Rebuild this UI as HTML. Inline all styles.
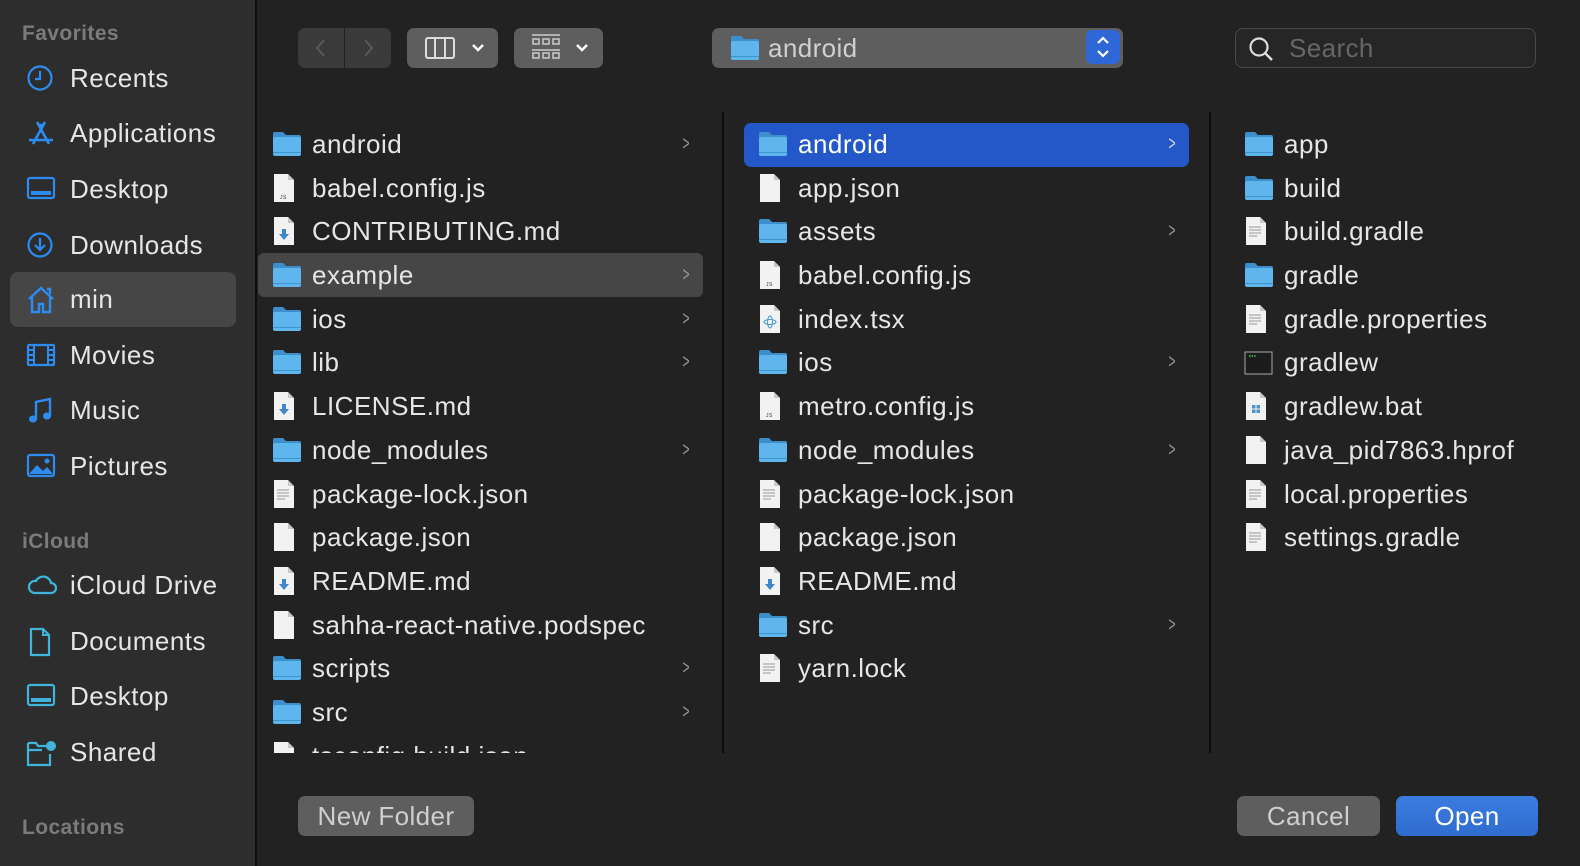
<!DOCTYPE html>
<html><head><meta charset="utf-8"><style>
*{margin:0;padding:0;box-sizing:border-box}
body{width:1580px;height:866px;overflow:hidden;background:#222;font-family:"Liberation Sans",sans-serif;color:#e6e6e6;position:relative}
.side{position:absolute;left:0;top:0;width:257px;height:866px;background:#2c2d2c;border-right:2px solid #0e0e0e}
.hdr{position:absolute;left:22px;font-size:21px;letter-spacing:.4px;color:#7b7b7b;font-weight:bold}
.si{position:absolute;left:10px;width:226px;height:55px;border-radius:8px;font-size:26px;letter-spacing:.5px;line-height:55px;padding-left:60px}
.si svg{position:absolute;left:16px;top:13px}
.sel{background:#464646}
.btn{position:absolute;background:#5e5e5e;border-radius:7px}
.col{position:absolute;top:123px}
.r{position:relative;height:43.7px;line-height:43.7px;font-size:26px;letter-spacing:.5px;white-space:nowrap}
.r svg{position:absolute;top:8px}
.ch{position:absolute;font-size:20px;color:#9a9a9a;transform:scaleX(.6)}
.vl{position:absolute;top:112px;width:2px;height:641px;background:#0c0c0c}
.bt{font-size:26px;letter-spacing:.4px}
</style></head><body>
<svg width="0" height="0" style="position:absolute">
<defs>
<symbol id="fo" viewBox="0 0 30 26"><path d="M1 3a2 2 0 0 1 2-2h8l3 3h13a2 2 0 0 1 2 2v2H1z" fill="#3d8fcc"/><rect x="1" y="6" width="28" height="19" rx="2" fill="#5fb6ec"/><rect x="1" y="21" width="28" height="1" fill="#3f93cf"/></symbol>
<symbol id="fi" viewBox="0 0 24 30"><path d="M2 1h14l6 6v22H2z" fill="#f2f2f2"/><path d="M16 1v6h6" fill="#c8c8c8"/></symbol>
<symbol id="ln" viewBox="0 0 24 30"><path d="M2 1h14l6 6v22H2z" fill="#f2f2f2"/><path d="M16 1v6h6" fill="#c8c8c8"/><path d="M5 11h12M5 14h12M5 17h12M5 20h8" stroke="#aaa" stroke-width="1.2"/></symbol>
<symbol id="js" viewBox="0 0 24 30"><path d="M2 1h14l6 6v22H2z" fill="#f2f2f2"/><path d="M16 1v6h6" fill="#c8c8c8"/><text x="8" y="26" font-size="5" fill="#333" font-family="Liberation Sans">JS</text></symbol>
<symbol id="md" viewBox="0 0 24 30"><path d="M2 1h14l6 6v22H2z" fill="#f2f2f2"/><path d="M16 1v6h6" fill="#c8c8c8"/><path d="M10 13h4v5h3l-5 6-5-6h3z" fill="#3f87c8"/></symbol>
<symbol id="tx" viewBox="0 0 24 30"><path d="M2 1h14l6 6v22H2z" fill="#f2f2f2"/><path d="M16 1v6h6" fill="#c8c8c8"/><ellipse cx="12" cy="18" rx="6" ry="2.5" fill="none" stroke="#4a9ad0"/><ellipse cx="12" cy="18" rx="2.5" ry="6" fill="none" stroke="#4a9ad0"/></symbol>
</defs></svg>

<div class="side">
<div class="hdr" style="top:22px">Favorites</div>
<div class="si" style="top:51px"><svg width="28" height="28" viewBox="0 0 28 28"><circle cx="14" cy="14" r="11.5" fill="none" stroke="#2e8cf0" stroke-width="2.2"/><path d="M14 7v8h-5" fill="none" stroke="#2e8cf0" stroke-width="2.2"/></svg>Recents</div>
<div class="si" style="top:106px"><svg width="30" height="30" viewBox="0 0 30 30"><path d="M11 3l12 22M19 3L7 25M3 21h24M12 6h6" fill="none" stroke="#2e8cf0" stroke-width="2.6"/></svg>Applications</div>
<div class="si" style="top:162px"><svg width="30" height="28" viewBox="0 0 30 28"><rect x="2" y="3" width="26" height="20" rx="2" fill="none" stroke="#2e8cf0" stroke-width="2.2"/><rect x="5" y="16" width="20" height="4" fill="#2e8cf0"/></svg>Desktop</div>
<div class="si" style="top:218px"><svg width="28" height="28" viewBox="0 0 28 28"><circle cx="14" cy="14" r="11.5" fill="none" stroke="#2e8cf0" stroke-width="2.2"/><path d="M14 7v12M9 14l5 5 5-5" fill="none" stroke="#2e8cf0" stroke-width="2.2"/></svg>Downloads</div>
<div class="si sel" style="top:272px"><svg width="30" height="30" viewBox="0 0 30 30"><path d="M3 14L15 3l12 11M6 12v15h7v-8h4v8h7V12M21 4h3v5" fill="none" stroke="#2e8cf0" stroke-width="2.4"/></svg>min</div>
<div class="si" style="top:328px"><svg width="30" height="28" viewBox="0 0 30 28"><rect x="2" y="4" width="26" height="20" rx="1" fill="none" stroke="#2e8cf0" stroke-width="2.2"/><path d="M8 4v20M22 4v20M2 9h6M2 14h6M2 19h6M22 9h6M22 14h6M22 19h6" stroke="#2e8cf0" stroke-width="2"/></svg>Movies</div>
<div class="si" style="top:383px"><svg width="28" height="30" viewBox="0 0 28 30"><path d="M10 23V6l14-3v17" fill="none" stroke="#2e8cf0" stroke-width="2.4"/><ellipse cx="7" cy="23" rx="4" ry="3.5" fill="#2e8cf0"/><ellipse cx="21" cy="20" rx="4" ry="3.5" fill="#2e8cf0"/></svg>Music</div>
<div class="si" style="top:439px"><svg width="30" height="28" viewBox="0 0 30 28"><rect x="2" y="3" width="26" height="21" rx="2" fill="none" stroke="#2e8cf0" stroke-width="2.2"/><path d="M3 22l8-9 6 6 4-4 6 7z" fill="#2e8cf0"/><circle cx="21" cy="9" r="2.5" fill="#2e8cf0"/></svg>Pictures</div>
<div class="hdr" style="top:530px">iCloud</div>
<div class="si" style="top:558px"><svg width="32" height="28" viewBox="0 0 32 28"><path d="M8 22h17a5 5 0 0 0 0-10 8 8 0 0 0-15-2 6 6 0 0 0-2 12z" fill="none" stroke="#3fb5dc" stroke-width="2.2"/></svg>iCloud Drive</div>
<div class="si" style="top:614px"><svg width="28" height="30" viewBox="0 0 28 30"><path d="M5 2h12l6 6v20H5z" fill="none" stroke="#3fb5dc" stroke-width="2.2"/><path d="M17 2v6h6" fill="none" stroke="#3fb5dc" stroke-width="2"/></svg>Documents</div>
<div class="si" style="top:669px"><svg width="30" height="28" viewBox="0 0 30 28"><rect x="2" y="3" width="26" height="20" rx="2" fill="none" stroke="#3fb5dc" stroke-width="2.2"/><rect x="5" y="16" width="20" height="4" fill="#3fb5dc"/></svg>Desktop</div>
<div class="si" style="top:725px"><svg width="32" height="30" viewBox="0 0 32 30"><path d="M2 5h8l2 3h10M2 5v22h22V16M2 12h14" fill="none" stroke="#3fb5dc" stroke-width="2.2"/><circle cx="25" cy="8" r="5" fill="#3fb5dc"/></svg>Shared</div>
<div class="hdr" style="top:816px">Locations</div>
</div>

<div class="btn" style="left:298px;top:28px;width:46px;height:40px;background:#3a3a3a;border-radius:7px 0 0 7px"><svg width="46" height="40"><path d="M26 12l-7 8 7 8" fill="none" stroke="#5a5a5a" stroke-width="2"/></svg></div>
<div class="btn" style="left:345px;top:28px;width:46px;height:40px;background:#3a3a3a;border-radius:0 7px 7px 0"><svg width="46" height="40"><path d="M20 12l7 8-7 8" fill="none" stroke="#5a5a5a" stroke-width="2"/></svg></div>
<div class="btn" style="left:407px;top:28px;width:91px;height:40px"><svg width="91" height="40"><rect x="19" y="10" width="28" height="20" rx="2" fill="none" stroke="#ddd" stroke-width="2"/><path d="M28 10v20M38 10v20" stroke="#ddd" stroke-width="2"/><path d="M66 17l5 5 5-5" fill="none" stroke="#fff" stroke-width="2.5"/></svg></div>
<div class="btn" style="left:514px;top:28px;width:89px;height:40px"><svg width="89" height="40"><path d="M18 7h28M18 22h28" stroke="#ccc" stroke-width="1.5"/><g fill="none" stroke="#ccc" stroke-width="1.5"><rect x="19" y="11" width="6" height="5"/><rect x="29" y="11" width="6" height="5"/><rect x="39" y="11" width="6" height="5"/><rect x="19" y="25" width="6" height="5"/><rect x="29" y="25" width="6" height="5"/><rect x="39" y="25" width="6" height="5"/></g><path d="M63 17l5 5 5-5" fill="none" stroke="#fff" stroke-width="2.5"/></svg></div>
<div class="btn bt" style="left:712px;top:28px;width:411px;height:40px;line-height:40px;color:#d0d0d0;padding-left:56px">android
<svg style="position:absolute;left:18px;top:7px" width="30" height="26"><use href="#fo"/></svg>
<div style="position:absolute;right:3px;top:2px;width:34px;height:34px;background:#2f67d6;border-radius:6px"><svg width="34" height="34"><path d="M12 13l5-5 5 5M12 21l5 5 5-5" fill="none" stroke="#fff" stroke-width="2.2"/></svg></div></div>
<div class="bt" style="position:absolute;left:1235px;top:28px;width:301px;height:40px;border:1px solid #4a4a4a;border-radius:8px;background:#262626;line-height:38px;color:#666;padding-left:53px">Search
<svg style="position:absolute;left:12px;top:7px" width="28" height="28"><circle cx="11" cy="11" r="8.5" fill="none" stroke="#ddd" stroke-width="2.2"/><path d="M17 17l7 7" stroke="#ddd" stroke-width="2.4"/></svg></div>

<div class="vl" style="left:722px"></div>
<div class="vl" style="left:1209px"></div>

<div style="position:absolute;left:258px;top:253px;width:445px;height:44px;background:#464646;border-radius:6px"></div>
<div class="col" style="left:272px;height:630px;overflow:hidden;width:440px">
<div class="r"><svg width="30" height="26"><use href="#fo"/></svg><span style="margin-left:40px">android</span><span class="ch" style="left:408px">&gt;</span></div>
<div class="r"><svg width="24" height="30" style="top:6px"><use href="#js"/></svg><span style="margin-left:40px">babel.config.js</span></div>
<div class="r"><svg width="24" height="30" style="top:6px"><use href="#md"/></svg><span style="margin-left:40px">CONTRIBUTING.md</span></div>
<div class="r"><svg width="30" height="26"><use href="#fo"/></svg><span style="margin-left:40px">example</span><span class="ch" style="left:408px">&gt;</span></div>
<div class="r"><svg width="30" height="26"><use href="#fo"/></svg><span style="margin-left:40px">ios</span><span class="ch" style="left:408px">&gt;</span></div>
<div class="r"><svg width="30" height="26"><use href="#fo"/></svg><span style="margin-left:40px">lib</span><span class="ch" style="left:408px">&gt;</span></div>
<div class="r"><svg width="24" height="30" style="top:6px"><use href="#md"/></svg><span style="margin-left:40px">LICENSE.md</span></div>
<div class="r"><svg width="30" height="26"><use href="#fo"/></svg><span style="margin-left:40px">node_modules</span><span class="ch" style="left:408px">&gt;</span></div>
<div class="r"><svg width="24" height="30" style="top:6px"><use href="#ln"/></svg><span style="margin-left:40px">package-lock.json</span></div>
<div class="r"><svg width="24" height="30" style="top:6px"><use href="#fi"/></svg><span style="margin-left:40px">package.json</span></div>
<div class="r"><svg width="24" height="30" style="top:6px"><use href="#md"/></svg><span style="margin-left:40px">README.md</span></div>
<div class="r"><svg width="24" height="30" style="top:6px"><use href="#fi"/></svg><span style="margin-left:40px">sahha-react-native.podspec</span></div>
<div class="r"><svg width="30" height="26"><use href="#fo"/></svg><span style="margin-left:40px">scripts</span><span class="ch" style="left:408px">&gt;</span></div>
<div class="r"><svg width="30" height="26"><use href="#fo"/></svg><span style="margin-left:40px">src</span><span class="ch" style="left:408px">&gt;</span></div>
<div class="r"><svg width="24" height="30" style="top:6px"><use href="#fi"/></svg><span style="margin-left:40px">tsconfig.build.json</span></div>
</div>

<div style="position:absolute;left:744px;top:123px;width:445px;height:44px;background:#2458c8;border-radius:7px"></div>
<div class="col" style="left:758px">
<div class="r" style="color:#fff"><svg width="30" height="26"><use href="#fo"/></svg><span style="margin-left:40px">android</span><span class="ch" style="left:408px;color:#ddd">&gt;</span></div>
<div class="r"><svg width="24" height="30" style="top:6px"><use href="#fi"/></svg><span style="margin-left:40px">app.json</span></div>
<div class="r"><svg width="30" height="26"><use href="#fo"/></svg><span style="margin-left:40px">assets</span><span class="ch" style="left:408px">&gt;</span></div>
<div class="r"><svg width="24" height="30" style="top:6px"><use href="#js"/></svg><span style="margin-left:40px">babel.config.js</span></div>
<div class="r"><svg width="24" height="30" style="top:6px"><use href="#tx"/></svg><span style="margin-left:40px">index.tsx</span></div>
<div class="r"><svg width="30" height="26"><use href="#fo"/></svg><span style="margin-left:40px">ios</span><span class="ch" style="left:408px">&gt;</span></div>
<div class="r"><svg width="24" height="30" style="top:6px"><use href="#js"/></svg><span style="margin-left:40px">metro.config.js</span></div>
<div class="r"><svg width="30" height="26"><use href="#fo"/></svg><span style="margin-left:40px">node_modules</span><span class="ch" style="left:408px">&gt;</span></div>
<div class="r"><svg width="24" height="30" style="top:6px"><use href="#ln"/></svg><span style="margin-left:40px">package-lock.json</span></div>
<div class="r"><svg width="24" height="30" style="top:6px"><use href="#fi"/></svg><span style="margin-left:40px">package.json</span></div>
<div class="r"><svg width="24" height="30" style="top:6px"><use href="#md"/></svg><span style="margin-left:40px">README.md</span></div>
<div class="r"><svg width="30" height="26"><use href="#fo"/></svg><span style="margin-left:40px">src</span><span class="ch" style="left:408px">&gt;</span></div>
<div class="r"><svg width="24" height="30" style="top:6px"><use href="#ln"/></svg><span style="margin-left:40px">yarn.lock</span></div>
</div>

<div class="col" style="left:1244px">
<div class="r"><svg width="30" height="26"><use href="#fo"/></svg><span style="margin-left:40px">app</span></div>
<div class="r"><svg width="30" height="26"><use href="#fo"/></svg><span style="margin-left:40px">build</span></div>
<div class="r"><svg width="24" height="30" style="top:6px"><use href="#ln"/></svg><span style="margin-left:40px">build.gradle</span></div>
<div class="r"><svg width="30" height="26"><use href="#fo"/></svg><span style="margin-left:40px">gradle</span></div>
<div class="r"><svg width="24" height="30" style="top:6px"><use href="#ln"/></svg><span style="margin-left:40px">gradle.properties</span></div>
<div class="r"><svg width="30" height="26" style="top:9px"><rect x="1" y="2" width="27" height="22" fill="#1c1c1c" stroke="#aaa" stroke-width="1"/><path d="M5 6h7" stroke="#4c4" stroke-width="1.5" stroke-dasharray="1.5 1"/></svg><span style="margin-left:40px">gradlew</span></div>
<div class="r"><svg width="24" height="30" style="top:6px"><use href="#fi"/><g fill="#4f93c8"><rect x="8" y="14" width="3.5" height="3.5"/><rect x="12.5" y="14" width="3.5" height="3.5"/><rect x="8" y="18.5" width="3.5" height="3.5"/><rect x="12.5" y="18.5" width="3.5" height="3.5"/></g></svg><span style="margin-left:40px">gradlew.bat</span></div>
<div class="r"><svg width="24" height="30" style="top:6px"><use href="#fi"/></svg><span style="margin-left:40px">java_pid7863.hprof</span></div>
<div class="r"><svg width="24" height="30" style="top:6px"><use href="#ln"/></svg><span style="margin-left:40px">local.properties</span></div>
<div class="r"><svg width="24" height="30" style="top:6px"><use href="#ln"/></svg><span style="margin-left:40px">settings.gradle</span></div>
</div>

<div class="btn bt" style="left:298px;top:796px;width:176px;height:40px;line-height:40px;text-align:center;color:#cfcfcf">New Folder</div>
<div class="btn bt" style="left:1237px;top:796px;width:143px;height:40px;line-height:40px;text-align:center;color:#cfcfcf">Cancel</div>
<div class="btn bt" style="left:1396px;top:796px;width:142px;height:40px;line-height:40px;text-align:center;color:#fff;background:linear-gradient(#3b7ce0,#2f6ccf)">Open</div>
</body></html>
